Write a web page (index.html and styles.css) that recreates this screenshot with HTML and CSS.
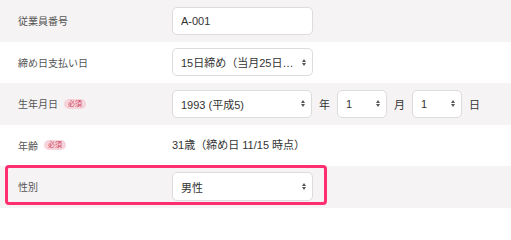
FILE: index.html
```html
<!DOCTYPE html>
<html lang="ja">
<head>
<meta charset="utf-8">
<title>従業員情報</title>
<link rel="stylesheet" href="styles.css">
</head>
<body>
<div class="form">
  <div class="row alt">
    <div class="label">従業員番号</div>
    <div class="field">
      <input class="control" type="text" value="A-001">
    </div>
  </div>
  <div class="row">
    <div class="label">締め日支払い日</div>
    <div class="field">
      <div class="control select"><span class="val">15日締め（当月25日…</span><svg class="arrow" width="4" height="7" viewBox="0 0 4 7"><path d="M0 3H4L2 0Z M0 4H4L2 7Z"/></svg></div>
    </div>
  </div>
  <div class="row alt">
    <div class="label">生年月日<span class="badge">必須</span></div>
    <div class="field">
      <div class="control select year"><span class="val">1993 (平成5)</span><svg class="arrow" width="4" height="7" viewBox="0 0 4 7"><path d="M0 3H4L2 0Z M0 4H4L2 7Z"/></svg></div>
      <span class="unit">年</span>
      <div class="control select small"><span class="val">1</span><svg class="arrow" width="4" height="7" viewBox="0 0 4 7"><path d="M0 3H4L2 0Z M0 4H4L2 7Z"/></svg></div>
      <span class="unit">月</span>
      <div class="control select small"><span class="val">1</span><svg class="arrow" width="4" height="7" viewBox="0 0 4 7"><path d="M0 3H4L2 0Z M0 4H4L2 7Z"/></svg></div>
      <span class="unit">日</span>
    </div>
  </div>
  <div class="row">
    <div class="label">年齢<span class="badge">必須</span></div>
    <div class="field">
      <span class="text">31歳（締め日 11/15 時点）</span>
    </div>
  </div>
  <div class="row alt">
    <div class="label">性別</div>
    <div class="field">
      <div class="control select tall"><span class="val">男性</span><svg class="arrow" width="4" height="7" viewBox="0 0 4 7"><path d="M0 3H4L2 0Z M0 4H4L2 7Z"/></svg></div>
    </div>
    <div class="highlight"></div>
  </div>
</div>
</body>
</html>
```

FILE: styles.css
```css
html, body {
  margin: 0;
  padding: 0;
  background: #ffffff;
  font-family: "Liberation Sans", "Noto Sans CJK JP", sans-serif;
}

.form {
  display: flex;
  flex-direction: column;
}

.row {
  position: relative;
  display: flex;
  align-items: center;
  height: 41.5px;
}

.row.alt {
  background: #f5f3f4;
}

.label {
  width: 172px;
  flex: none;
  box-sizing: border-box;
  padding-left: 18px;
  display: flex;
  align-items: center;
  font-size: 10px;
  color: #555555;
}

.badge {
  margin-left: 6px;
  width: 22px;
  height: 10px;
  border-radius: 5px;
  background: #f7d4db;
  color: #d0445e;
  font-size: 7px;
  line-height: 10px;
  display: flex;
  align-items: center;
  justify-content: center;
}

.field {
  display: flex;
  align-items: center;
  gap: 7px;
  font-size: 11px;
  color: #333333;
}

.control {
  box-sizing: border-box;
  width: 141px;
  height: 28px;
  margin: 0;
  border: 1px solid #dcdcdc;
  border-radius: 5px;
  background: #ffffff;
  padding: 0 6px 0 8px;
  font-family: inherit;
  font-size: 11px;
  color: #333333;
  outline: none;
}

.select {
  display: flex;
  align-items: center;
  justify-content: space-between;
}

.select .val {
  white-space: nowrap;
  overflow: hidden;
}

.arrow {
  flex: none;
  fill: #555555;
}

.year {
  width: 140px;
}

.small {
  width: 50px;
}

.tall {
  height: 29px;
}

.unit {
  font-size: 11px;
  color: #333333;
}

.text {
  font-size: 11px;
  color: #333333;
  margin-top: -3px;
}

.highlight {
  position: absolute;
  left: 5px;
  top: -1px;
  width: 322px;
  height: 40px;
  box-sizing: border-box;
  border: 3px solid #ff2e6e;
  border-radius: 4px;
  pointer-events: none;
}
```
